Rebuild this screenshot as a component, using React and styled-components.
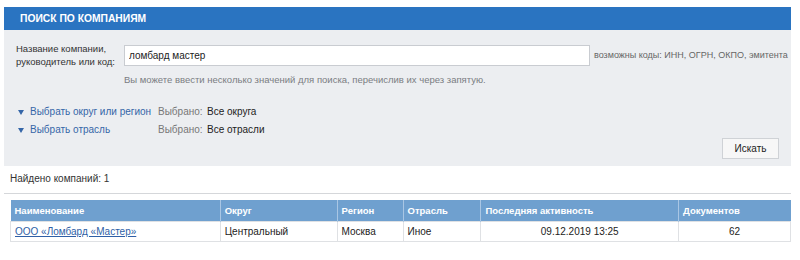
import React from 'react';
import styled, { createGlobalStyle } from 'styled-components';

const GlobalStyle = createGlobalStyle`
  body {
    margin: 0;
    background: #fff;
    font-family: "Liberation Sans", Arial, sans-serif;
    color: #222;
  }
`;

const Page = styled.div`
  padding: 7px 9px 0 4px;
  width: 787px;
`;

const SearchBox = styled.section`
  background: #eceef1;
`;

const SearchTitle = styled.h2`
  margin: 0;
  height: 23px;
  line-height: 24px;
  padding-left: 16px;
  background: #2a74c1;
  color: #fff;
  font-size: 10.3px;
  font-weight: bold;
  text-transform: uppercase;
`;

const SearchBody = styled.div`
  padding: 12px 12px 7px 12px;
`;

const FieldRow = styled.div`
  display: flex;
  align-items: center;
`;

const FieldLabel = styled.label`
  flex-shrink: 0;
  width: 108px;
  font-size: 9.5px;
  line-height: 13px;
  color: #333;
  white-space: nowrap;
`;

const TextInput = styled.input`
  flex-shrink: 0;
  box-sizing: border-box;
  width: 466px;
  height: 21px;
  padding: 0 4px;
  border: 1px solid #c9ccd1;
  background: #fff;
  font-family: inherit;
  font-size: 10px;
  color: #222;
  outline: none;
`;

const CodesNote = styled.span`
  margin-left: 4px;
  font-size: 9px;
  color: #666;
  white-space: nowrap;
`;

const Hint = styled.p`
  margin: 6px 0 0 108px;
  font-size: 9.5px;
  line-height: 12px;
  color: #7a7d82;
`;

const Filters = styled.div`
  margin-top: 19px;
  display: grid;
  grid-template-columns: 142px 49px 1fr;
  row-gap: 4px;
  font-size: 10px;
  line-height: 14px;
`;

const Toggle = styled.a`
  display: flex;
  align-items: center;
  gap: 6px;
  padding-left: 2px;
  color: #3566a8;
  text-decoration: none;
  cursor: pointer;
`;

const Arrow = styled.span`
  width: 0;
  height: 0;
  border-left: 3px solid transparent;
  border-right: 3px solid transparent;
  border-top: 5px solid #3566a8;
`;

const Muted = styled.span`
  color: #777;
`;

const Value = styled.span`
  color: #222;
`;

const ButtonRow = styled.div`
  display: flex;
  justify-content: flex-end;
  margin-top: 1px;
`;

const SearchButton = styled.button`
  width: 57px;
  height: 21px;
  border: 1px solid #cfd2d6;
  background: #f7f7f7;
  font-family: inherit;
  font-size: 10px;
  color: #222;
  cursor: pointer;
`;

const Found = styled.div`
  padding: 7px 0 0 6px;
  height: 20px;
  box-sizing: content-box;
  font-size: 10px;
  line-height: 12px;
  color: #333;
  border-bottom: 1px solid #d5d7da;
`;

const Results = styled.table`
  margin: 6px 0 0 6px;
  width: 781px;
  border-collapse: collapse;
  font-size: 10px;
`;

const HeadCell = styled.th`
  height: 21px;
  padding: 0 4px;
  background: #6fa0cf;
  color: #fff;
  font-size: 9.5px;
  font-weight: bold;
  text-align: left;
  border-left: 1px solid #a9c6e4;
  &:first-child { border-left: none; }
`;

const Cell = styled.td`
  height: 19px;
  padding: 0 4px;
  color: #222;
  text-align: ${p => (p.$center ? 'center' : 'left')};
  border: 1px solid #dfe1e4;
`;

const CompanyLink = styled.a`
  color: #2f5fa6;
  text-decoration: underline;
`;

const columns = [
  { title: 'Наименование', width: 210 },
  { title: 'Округ', width: 117 },
  { title: 'Регион', width: 66 },
  { title: 'Отрасль', width: 78 },
  { title: 'Последняя активность', width: 198 },
  { title: 'Документов', width: 112 },
];

export default function App() {
  return (
    <Page>
      <GlobalStyle />
      <SearchBox>
        <SearchTitle>Поиск по компаниям</SearchTitle>
        <SearchBody>
          <FieldRow>
            <FieldLabel htmlFor="q">
              Название компании,<br />руководитель или код:
            </FieldLabel>
            <TextInput id="q" defaultValue="ломбард мастер" />
            <CodesNote>возможны коды: ИНН, ОГРН, ОКПО, эмитента</CodesNote>
          </FieldRow>
          <Hint>Вы можете ввести несколько значений для поиска, перечислив их через запятую.</Hint>
          <Filters>
            <Toggle><Arrow />Выбрать округ или регион</Toggle>
            <Muted>Выбрано:</Muted>
            <Value>Все округа</Value>
            <Toggle><Arrow />Выбрать отрасль</Toggle>
            <Muted>Выбрано:</Muted>
            <Value>Все отрасли</Value>
          </Filters>
          <ButtonRow>
            <SearchButton>Искать</SearchButton>
          </ButtonRow>
        </SearchBody>
      </SearchBox>
      <Found>Найдено компаний: 1</Found>
      <Results>
        <colgroup>
          {columns.map(c => <col key={c.title} width={c.width} />)}
        </colgroup>
        <thead>
          <tr>
            {columns.map(c => <HeadCell key={c.title}>{c.title}</HeadCell>)}
          </tr>
        </thead>
        <tbody>
          <tr>
            <Cell><CompanyLink href="#">ООО «Ломбард «Мастер»</CompanyLink></Cell>
            <Cell>Центральный</Cell>
            <Cell>Москва</Cell>
            <Cell>Иное</Cell>
            <Cell $center>09.12.2019 13:25</Cell>
            <Cell $center>62</Cell>
          </tr>
        </tbody>
      </Results>
    </Page>
  );
}
